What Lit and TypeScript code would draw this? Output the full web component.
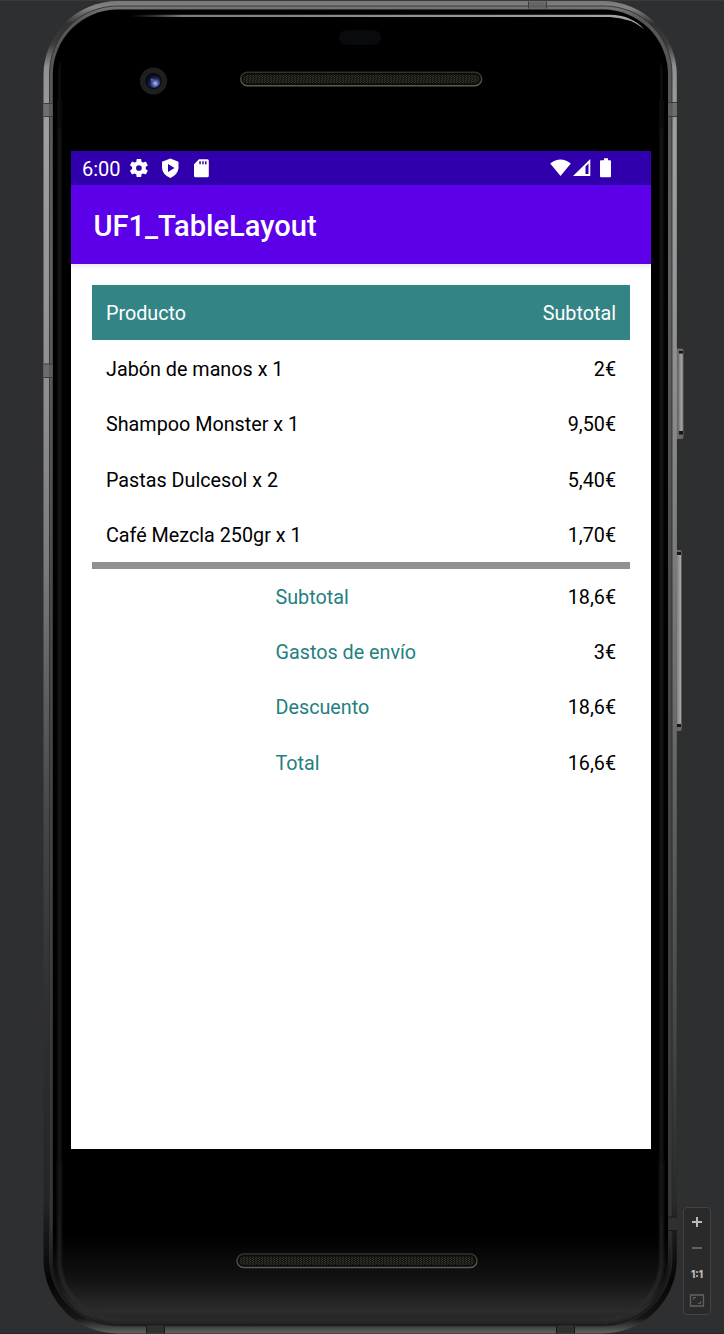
import { LitElement, html, css, svg } from "lit";
import { customElement } from "lit/decorators.js";

const products = [
  ["Jabón de manos x 1", "2€"],
  ["Shampoo Monster x 1", "9,50€"],
  ["Pastas Dulcesol x 2", "5,40€"],
  ["Café Mezcla 250gr x 1", "1,70€"],
];
const totals = [
  ["Subtotal", "18,6€"],
  ["Gastos de envío", "3€"],
  ["Descuento", "18,6€"],
  ["Total", "16,6€"],
];

@customElement("phone-frame")
class PhoneFrame extends LitElement {
  static styles = css`
    :host { display: block; width: 724px; height: 1334px; }
    svg { display: block; }
  `;

  grille(x: number, y: number, w: number) {
    return svg`
      <rect x=${x} y=${y} width=${w} height="13.5" rx="6.75" fill="#0b0b0a" stroke="url(#grilleEdge)" stroke-width="1.4"/>
      <rect x=${x + 2.5} y=${y + 2.5} width=${w - 5} height="8.5" rx="4.25" fill="url(#mesh)"/>`;
  }

  render() {
    return html`<svg width="724" height="1334" viewBox="0 0 724 1334">
      <defs>
        <linearGradient id="rail" gradientUnits="userSpaceOnUse" x1="0" y1="0" x2="0" y2="1334">
          <stop offset="0" stop-color="#777577"/><stop offset=".006" stop-color="#858385"/>
          <stop offset=".018" stop-color="#303030"/><stop offset=".033" stop-color="#3c3c3c"/>
          <stop offset=".05" stop-color="#929192"/><stop offset=".1" stop-color="#a09fa0"/>
          <stop offset=".3" stop-color="#8f8e8f"/><stop offset=".42" stop-color="#7c7c7c"/>
          <stop offset=".5" stop-color="#646464"/>
          <stop offset=".62" stop-color="#454545"/><stop offset=".75" stop-color="#303030"/>
          <stop offset=".9" stop-color="#252525"/><stop offset=".96" stop-color="#060606"/>
          <stop offset=".988" stop-color="#151515"/><stop offset="1" stop-color="#666"/>
        </linearGradient>
        <linearGradient id="inner" x1="0" y1="0" x2="0" y2="1">
          <stop offset="0" stop-color="#777"/><stop offset=".012" stop-color="#555"/><stop offset=".2" stop-color="#606060"/>
          <stop offset=".45" stop-color="#4a4a4a"/>
          <stop offset=".7" stop-color="#404040"/><stop offset=".92" stop-color="#363636"/>
          <stop offset=".96" stop-color="#181818"/><stop offset="1" stop-color="#1c1c1c"/>
        </linearGradient>
        <linearGradient id="glow" x1="0" y1="0" x2="0" y2="1">
          <stop offset="0" stop-color="#000"/><stop offset=".932" stop-color="#000"/>
          <stop offset=".965" stop-color="#121212"/><stop offset=".99" stop-color="#2c2c2c"/>
          <stop offset="1" stop-color="#202020"/>
        </linearGradient>
        <linearGradient id="edge" gradientUnits="userSpaceOnUse" x1="0" y1="0" x2="0" y2="1334">
          <stop offset=".03" stop-color="#000"/><stop offset=".1" stop-color="#1b1b1b"/>
          <stop offset=".85" stop-color="#1d1d1d"/><stop offset="1" stop-color="#2e2e2e"/>
        </linearGradient>
        <linearGradient id="rightRail" x1="0" y1="0" x2="0" y2="1">
          <stop offset="0" stop-color="#aaa" stop-opacity="0"/><stop offset=".5" stop-color="#707070"/>
          <stop offset=".8" stop-color="#484848"/><stop offset="1" stop-color="#333" stop-opacity="0"/>
        </linearGradient>
        <linearGradient id="shine" x1="0" y1="0" x2="1" y2="0">
          <stop offset="0" stop-color="#555" stop-opacity="0"/><stop offset=".1" stop-color="#787d80"/>
          <stop offset="1" stop-color="#a3a9aa"/>
        </linearGradient>
        <linearGradient id="grilleEdge" x1="0" y1="0" x2="0" y2="1">
          <stop offset="0" stop-color="#303030"/><stop offset="1" stop-color="#5c5b57"/>
        </linearGradient>
        <linearGradient id="button" x1="0" y1="0" x2="1" y2="0">
          <stop offset="0" stop-color="#777"/><stop offset=".5" stop-color="#959595"/><stop offset="1" stop-color="#aaa"/>
        </linearGradient>
        <radialGradient id="lens" cx=".63" cy=".67" r=".6">
          <stop offset="0" stop-color="#b5c5ff"/><stop offset=".25" stop-color="#6577c5"/>
          <stop offset=".6" stop-color="#202653"/><stop offset="1" stop-color="#080a18"/>
        </radialGradient>
        <pattern id="mesh" width="3" height="2" patternUnits="userSpaceOnUse">
          <rect width="3" height="2" fill="#161511"/><path d="M0 0h1v1H0zM1 1h1v1H1z" fill="#37342c"/>
        </pattern>
        <filter id="soft" x="-5%" y="-5%" width="110%" height="110%"><feGaussianBlur stdDeviation="1.500"/></filter>
      </defs>

      <rect width="724" height="1334" fill="#2e2f31"/>
      <rect width="724" height="1" fill="#3a3a3b"/>
      <rect y="1333" width="724" height="1" fill="#292526"/>

      <rect x="674" y="348.500" width="9.500" height="90.500" rx="2" fill="#686868"/>
      <rect x="678.500" y="353" width="4" height="80" fill="url(#button)"/>
      <path d="M679 351h4v2.500h-4zM679 431h4v3.500h-4z" fill="#161616"/>
      <rect x="673" y="550" width="8.800" height="181" rx="2" fill="#686868"/>
      <rect x="676.500" y="555" width="4.500" height="171" fill="url(#button)"/>
      <path d="M677 552h4v3h-4zM677 724h4v3h-4z" fill="#161616"/>

      <rect x="43.500" y="1" width="633.300" height="1332.500" rx="74" fill="url(#rail)"/>
      <rect x="672.300" y="75" width="4.300" height="1184" fill="url(#rightRail)"/>
      <rect x="49.500" y="6" width="622.500" height="1320" rx="68" fill="url(#inner)" stroke="#292929" stroke-width=".8"/>
      <rect x="52.800" y="9.500" width="615.200" height="1315" rx="65" fill="url(#glow)"/>
      <rect x="59.500" y="14" width="602" height="1306" rx="60" fill="none" stroke="url(#edge)" stroke-width="3" filter="url(#soft)"/>
      <path d="M130 14.800H610Q631 15 644 29Q631 18 610 17H130z" fill="url(#shine)"/>

      <path d="M43.500 103.500h9v13h-9zM668 102.500h9v14h-9zM43.500 364h9v13.500h-9zM528.500 1.500h18v7h-18z" fill="#606060" fill-opacity=".75"/>
      <path d="M43.500 103.500h9M43.500 116.500h9M668 102.500h9M668 116.500h9M43.500 364h9M43.500 377.500h9M528.500 1.500v7M546.500 1.500v7" stroke="#3c3c3c"/>
      <path d="M668 1217h9v13.500h-9zM146.500 1325.500h18v8h-18zM556.500 1325.500h18v8h-18z" fill="#303030"/>
      <path d="M668 1217h9M668 1230.500h9M146.500 1325.500v8M164.500 1325.500v8M556.500 1325.500v8M574.500 1325.500v8" stroke="#181818"/>

      <rect x="339" y="30" width="42" height="15" rx="7.500" fill="#090a0e"/>
      <circle cx="153.500" cy="81" r="13.600" fill="#201f20"/>
      <circle cx="153.500" cy="81" r="8.300" fill="#090a14"/>
      <circle cx="153.500" cy="81" r="7" fill="url(#lens)"/>
      <circle cx="152" cy="79.800" r="1.200" fill="#5666b4"/>
      ${this.grille(240.7, 72.3, 241)}
      ${this.grille(237, 1254, 240)}
    </svg>`;
  }
}

@customElement("zoom-controls")
class ZoomControls extends LitElement {
  static styles = css`
    :host { display: block; box-sizing: border-box; width: 28px; height: 108px; border: 1px solid #434343; border-radius: 4px; background: #2a2a2a; }
    svg { display: block; }
    text { font: 800 11px Inter, sans-serif; }
  `;
  render() {
    return html`<svg width="26" height="106" viewBox="0 0 26 106">
      <path d="M8 14h10M13 9v10" stroke="#bbb" stroke-width="2"/>
      <path d="M8 40h10" stroke="#626262" stroke-width="2"/>
      <text x="13" y="70" text-anchor="middle" textLength="12" lengthAdjust="spacingAndGlyphs" fill="#bbb">1:1</text>
      <path d="M6.500 87h13v11h-13z" fill="none" stroke="#626262" stroke-width="1.300"/>
      <path d="M9.500 92v-2.500H12M16.500 93v2.500H14" fill="none" stroke="#626262"/>
    </svg>`;
  }
}

@customElement("app-root")
class AppRoot extends LitElement {
  static styles = css`
    :host { display: grid; width: 724px; height: 1334px; overflow: hidden; font-family: Roboto, sans-serif; }
    phone-frame, .screen, zoom-controls { grid-area: 1 / 1; }
    .screen { width: 580px; height: 998px; margin: 151px 0 0 71px; background: #fff; z-index: 1; }
    zoom-controls { margin: 1207px 0 0 683px; z-index: 1; }
    .status { display: flex; align-items: center; height: 34px; box-sizing: border-box; padding: 0 39px 0 11px; background: #3000ad; color: #fff; font-size: 20px; }
    .time { width: 47px; line-height: 34px; padding-top: 2px; box-sizing: border-box; }
    .status svg { display: block; }
    .signals { margin-left: auto; }
    .bar { height: 79px; display: flex; align-items: center; box-sizing: border-box; padding: 2px 0 0 22.5px; background: #5b00e8; color: #fff; font-size: 29.1px; font-weight: 500; }
    .content { padding: 21px 21px 0; background: linear-gradient(#ececec, #fff 6px); }
    .row { display: flex; justify-content: space-between; height: 55.4px; line-height: 60px; box-sizing: border-box; padding: 0 14px; font-size: 19.75px; color: #000; }
    .head { background: #338585; color: #fff; height: 55px; line-height: 58px; }
    .rule { height: 7px; background: #919191; }
    .total { padding-left: 183.500px; line-height: 58px; }
    .label { color: #248080; }
  `;

  render() {
    return html`
      <phone-frame></phone-frame>
      <main class="screen">
        <div class="status">
          <span class="time">6:00</span>
          <svg width="82" height="22" viewBox="0 0 82 22" fill="#fff">
            <g transform="translate(-1.500 -.4) scale(.95)"><path d="M19.140 12.940c.04-.3.060-.61.060-.94s-.02-.64-.07-.94l2.030-1.580a.49.490 0 0 0 .12-.61l-1.920-3.320a.49.490 0 0 0-.59-.22l-2.390.96a7 7 0 0 0-1.620-.94l-.36-2.540a.48.480 0 0 0-.48-.41h-3.840a.47.470 0 0 0-.47.410l-.36 2.540c-.59.240-1.130.570-1.620.94l-2.390-.96a.47.470 0 0 0-.59.220L2.740 8.870a.47.470 0 0 0 .12.610l2.030 1.580c-.05.300-.09.630-.09.940s.02.640.07.940l-2.030 1.580a.49.490 0 0 0-.12.610l1.920 3.320c.12.220.37.290.59.220l2.390-.96c.5.380 1.030.700 1.620.94l.36 2.540c.05.240.24.410.48.410h3.840c.24 0 .44-.17.470-.41l.36-2.540a7 7 0 0 0 1.620-.94l2.390.96c.22.080.47 0 .59-.22l1.920-3.320a.47.470 0 0 0-.12-.61zM12 15a3 3 0 1 1 0-6 3 3 0 0 1 0 6z"/></g>
            <path fill-rule="evenodd" d="M41.300 1.500L49.500 4.700V11Q49 17.500 41.300 21Q33.500 17.500 33 11V4.700zM39 7v8l6.500-4z"/>
            <path fill-rule="evenodd" d="M70 2.200H78.300a1.500 1.500 0 0 1 1.500 1.500v15A1.500 1.500 0 0 1 78.300 20.200H66.500A1.500 1.500 0 0 1 65 18.700V7.200zM70.300 4.200v3h1.500v-3zM73.200 4.200v3h1.500v-3zM76 4.200v3h1.500v-3z"/>
          </svg>
          <svg class="signals" width="62" height="22" viewBox="0 0 62 22" fill="#fff">
            <path d="M.2 6.500Q10.500-1.500 20.800 6.500L10.500 19z"/>
            <path fill-rule="evenodd" d="M23 19L40.300 2V19zM35.500 9.500V17H38.500V6.500z"/>
            <path d="M54 1.200h4v2h2q1 0 1 1v15q0 1-1 1h-9q-1 0-1-1V4.200q0-1 1-1H54z"/>
          </svg>
        </div>
        <header class="bar">UF1_TableLayout</header>
        <section class="content">
          <div class="row head"><span>Producto</span><span>Subtotal</span></div>
          ${products.map(([n, p]) => html`<div class="row"><span>${n}</span><span>${p}</span></div>`)}
          <div class="rule"></div>
          ${totals.map(([n, p]) => html`<div class="row total"><span class="label">${n}</span><span>${p}</span></div>`)}
        </section>
      </main>
      <zoom-controls></zoom-controls>`;
  }
}
